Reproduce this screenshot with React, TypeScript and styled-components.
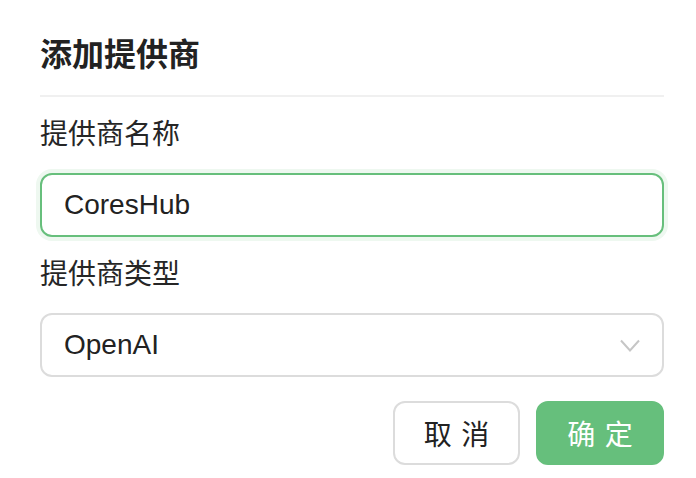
import React from "react";
import styled, { createGlobalStyle } from "styled-components";

const Global = createGlobalStyle`
  html, body { margin: 0; padding: 0; background: #ffffff; }
  body {
    font-family: "Liberation Sans", "Noto Sans CJK SC", sans-serif;
    color: #222222;
  }
  * { box-sizing: border-box; }
`;

const Dialog = styled.div`
  width: 696px;
  padding: 31px 32px 0 40px;
  display: flex;
  flex-direction: column;
`;

const Title = styled.div`
  font-size: 32px;
  line-height: 48px;
  font-weight: 700;
  color: #222222;
`;

const Divider = styled.div`
  height: 2px;
  background: #f0f0f0;
  margin: 16px 0 17px;
`;

const Field = styled.div`
  display: flex;
  flex-direction: column;
  margin-bottom: 17px;
`;

const Label = styled.div`
  font-size: 28px;
  line-height: 42px;
  margin-bottom: 17px;
  color: #262626;
`;

const TextInput = styled.input`
  width: 100%;
  height: 64px;
  border: 2px solid #67bf7c;
  border-radius: 12px;
  box-shadow: 0 0 0 4px #eef8f0;
  padding: 0 22px;
  font-family: inherit;
  font-size: 28px;
  color: #222222;
  outline: none;
  background: #ffffff;
`;

const Select = styled.div`
  height: 64px;
  border: 2px solid #dcdcdc;
  border-radius: 12px;
  padding: 0 22px;
  display: flex;
  align-items: center;
  justify-content: space-between;
  font-size: 28px;
  color: #222222;
`;

const Footer = styled.div`
  display: flex;
  justify-content: flex-end;
  gap: 16px;
  margin-top: 7px;
`;

const Button = styled.button<{ $primary?: boolean; $w: number }>`
  width: ${(p) => p.$w}px;
  height: 64px;
  border-radius: 12px;
  border: 2px solid ${(p) => (p.$primary ? "#66bf7c" : "#dcdcdc")};
  background: ${(p) => (p.$primary ? "#66bf7c" : "#ffffff")};
  color: ${(p) => (p.$primary ? "#ffffff" : "#222222")};
  font-family: inherit;
  font-size: 28px;
  display: flex;
  align-items: center;
  justify-content: center;
  padding: 0;
  cursor: pointer;
  span {
    letter-spacing: 0.34em;
    margin-right: -0.34em;
  }
`;

const Chevron = () => (
  <svg width="20" height="13" viewBox="0 0 20 13" fill="none">
    <polyline points="1,1.5 10,11.5 19,1.5" stroke="#c6c6c6" strokeWidth="2" />
  </svg>
);

export default function App() {
  return (
    <>
      <Global />
      <Dialog>
        <Title>添加提供商</Title>
        <Divider />
        <Field>
          <Label>提供商名称</Label>
          <TextInput defaultValue="CoresHub" />
        </Field>
        <Field>
          <Label>提供商类型</Label>
          <Select>
            <span>OpenAI</span>
            <Chevron />
          </Select>
        </Field>
        <Footer>
          <Button $w={127}>
            <span>取消</span>
          </Button>
          <Button $w={128} $primary>
            <span>确定</span>
          </Button>
        </Footer>
      </Dialog>
    </>
  );
}
